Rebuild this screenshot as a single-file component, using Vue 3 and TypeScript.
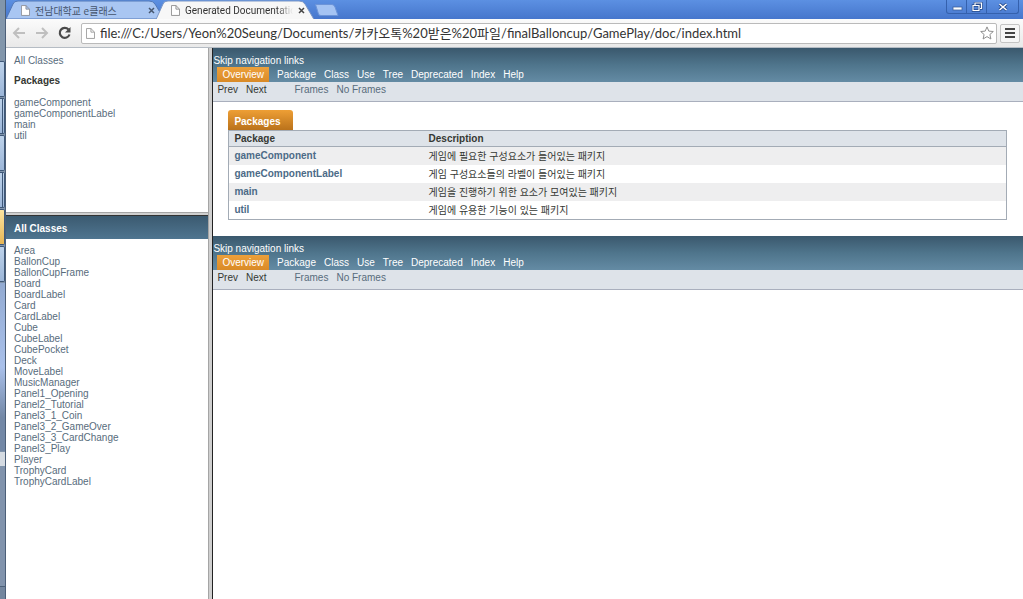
<script setup lang="ts">
import { ref } from 'vue'

interface Pkg {
  name: string
  description: string
}

const address = ref('file:///C:/Users/Yeon%20Seung/Documents/카카오톡%20받은%20파일/finalBalloncup/GamePlay/doc/index.html')

const packages: Pkg[] = [
  { name: 'gameComponent', description: '게임에 필요한 구성요소가 들어있는 패키지' },
  { name: 'gameComponentLabel', description: '게임 구성요소들의 라벨이 들어있는 패키지' },
  { name: 'main', description: '게임을 진행하기 위한 요소가 모여있는 패키지' },
  { name: 'util', description: '게임에 유용한 기능이 있는 패키지' },
]

const classes: string[] = [
  'Area', 'BallonCup', 'BallonCupFrame', 'Board', 'BoardLabel', 'Card', 'CardLabel', 'Cube',
  'CubeLabel', 'CubePocket', 'Deck', 'MoveLabel', 'MusicManager', 'Panel1_Opening',
  'Panel2_Tutorial', 'Panel3_1_Coin', 'Panel3_2_GameOver', 'Panel3_3_CardChange',
  'Panel3_Play', 'Player', 'TrophyCard', 'TrophyCardLabel',
]

const navItems: string[] = ['Package', 'Class', 'Use', 'Tree', 'Deprecated', 'Index', 'Help']
</script>

<template>
  <div class="desktop">
    <div class="taskbar" aria-hidden="true">
      <span class="task-space"></span>
      <span class="task"></span>
      <span class="task double"></span>
      <span class="task"></span>
      <span class="task double"></span>
      <span class="task active"></span>
      <span class="task"></span>
      <span class="task-rest"></span>
      <span class="task-lang"></span>
      <span class="task-clock"></span>
      <span class="task-end"></span>
    </div>

    <div class="browser">
      <header class="titlebar">
        <div class="tab">
          <svg class="tab-shape" viewBox="0 0 158 19" preserveAspectRatio="none">
            <path d="M0 19 L7 4 Q8 1 12 1 H143 Q147 1 149 4 L158 19 Z" fill="#a9c6f2" stroke="#5279b8" />
          </svg>
          <svg class="page-icon" viewBox="0 0 10 12"><path d="M.5.5h5l4 4v7h-9zM5.500.5v4h4" fill="#fff" stroke="#8c9099" /></svg>
          <span class="tab-title korean">전남대학교 e클래스</span>
          <button class="tab-close" aria-label="탭 닫기"><svg viewBox="0 0 7 7"><path d="M1 1l5 5M6 1l-5 5" stroke="#46566e" stroke-width="1.500" /></svg></button>
        </div>
        <div class="tab current">
          <svg class="tab-shape" viewBox="0 0 158 19" preserveAspectRatio="none">
            <path d="M0 19.500 L7 4 Q8 1 12 1 H143 Q147 1 149 4 L158 19.500" fill="#f7f7f7" stroke="#7d98c6" />
          </svg>
          <svg class="page-icon" viewBox="0 0 10 12"><path d="M.5.5h5l4 4v7h-9zM5.500.5v4h4" fill="#fff" stroke="#8c8c8c" /></svg>
          <span class="tab-title">Generated Documentatio</span>
          <button class="tab-close" aria-label="탭 닫기"><svg viewBox="0 0 7 7"><path d="M1 1l5 5M6 1l-5 5" stroke="#444" stroke-width="1.500" /></svg></button>
        </div>
        <button class="new-tab" aria-label="새 탭">
          <svg viewBox="0 0 26 12"><path d="M1.500 .5 H18 Q20 .5 21 3 L24 11.500 H7 Q5 11.500 4.500 10 Z" fill="#a4c3f3" stroke="#6c94d8" /></svg>
        </button>
        <div class="window-buttons">
          <button class="win" aria-label="최소화"><svg viewBox="0 0 12 10"><rect x="2" y="5" width="9" height="3" fill="#fff" stroke="#3c5f9c" stroke-width=".8" /></svg></button>
          <button class="win" aria-label="이전 크기로"><svg viewBox="0 0 12 10"><path d="M4 3V1h6.500v5.500H9M2 3.500h6v5H2z" fill="none" stroke="#24498a" stroke-width="2.400" /><path d="M4 3V1h6.500v5.500H9M2 3.500h6v5H2z" fill="none" stroke="#fff" stroke-width="1.200" /></svg></button>
          <button class="win wide" aria-label="닫기"><svg viewBox="0 0 12 10"><path d="M2.500 2l7 6M9.500 2l-7 6" stroke="#24498a" stroke-width="3" /><path d="M2.500 2l7 6M9.500 2l-7 6" stroke="#fff" stroke-width="1.600" /></svg></button>
        </div>
      </header>

      <div class="toolbar">
        <button class="tool" aria-label="뒤로"><svg viewBox="0 0 14 14"><path d="M13 7H2M7 2L2 7l5 5" fill="none" stroke="#bfbfbf" stroke-width="2" /></svg></button>
        <button class="tool" aria-label="앞으로"><svg viewBox="0 0 14 14"><path d="M1 7h11M7 2l5 5-5 5" fill="none" stroke="#bfbfbf" stroke-width="2" /></svg></button>
        <button class="tool" aria-label="새로고침"><svg viewBox="0 0 14 14"><path d="M10.500 3.500A5 5 0 1 0 11.500 8.500" fill="none" stroke="#4a4a4a" stroke-width="2.200" /><path d="M12.500 1v5.500H7z" fill="#4a4a4a" /></svg></button>
        <div class="omnibox">
          <svg class="page-icon" viewBox="0 0 10 12"><path d="M.5.5h5l4 4v7h-9zM5.500.5v4h4" fill="#fff" stroke="#999" /></svg>
          <input v-model="address" class="address" type="text" aria-label="주소" />
          <button class="star" aria-label="북마크"><svg viewBox="0 0 14 14"><path d="M7 .9l1.800 4.200 4.500.4-3.400 3 1 4.500L7 10.600 3.100 13l1-4.500-3.400-3 4.500-.4z" fill="#fff" stroke="#8e8e8e" /></svg></button>
        </div>
        <button class="menu" aria-label="메뉴"><svg viewBox="0 0 10 10"><path d="M0 1h10M0 5h10M0 9h10" stroke="#444" stroke-width="2" /></svg></button>
      </div>

      <div class="frames">
        <div class="left-frames">
          <nav class="package-frame">
            <a href="#">All Classes</a>
            <h2>Packages</h2>
            <ul>
              <li v-for="p in packages" :key="p.name"><a href="#">{{ p.name }}</a></li>
            </ul>
          </nav>
          <div class="h-split"></div>
          <nav class="class-frame">
            <h1>All Classes</h1>
            <ul>
              <li v-for="c in classes" :key="c"><a href="#">{{ c }}</a></li>
            </ul>
          </nav>
        </div>
        <div class="v-split"></div>
        <main class="doc">
          <template v-for="part in ['top', 'bottom']" :key="part">
            <nav class="doc-nav">
              <div class="nav-bar">
                <a class="skip" href="#">Skip navigation links</a>
                <ul class="nav-list">
                  <li class="here">Overview</li>
                  <li v-for="n in navItems" :key="n"><a href="#">{{ n }}</a></li>
                </ul>
              </div>
              <div class="sub-nav">
                <ul>
                  <li>Prev</li>
                  <li>Next</li>
                </ul>
                <ul>
                  <li><a href="#">Frames</a></li>
                  <li><a href="#">No Frames</a></li>
                </ul>
              </div>
            </nav>
            <div v-if="part === 'top'" class="content">
              <table>
                <caption><span>Packages</span></caption>
                <thead>
                  <tr><th scope="col">Package</th><th scope="col">Description</th></tr>
                </thead>
                <tbody>
                  <tr v-for="p in packages" :key="p.name">
                    <td class="name"><a href="#">{{ p.name }}</a></td>
                    <td class="description">{{ p.description }}</td>
                  </tr>
                </tbody>
              </table>
            </div>
          </template>
        </main>
      </div>
    </div>
  </div>
</template>

<style>
html,
body,
#app {
  height: 100%;
}
</style>

<style scoped>
.desktop {
  display: flex;
  height: 100%;
  overflow: hidden;
  background: #fff;
  font: 10px/11px "Liberation Sans", "Noto Sans CJK KR", sans-serif;
  color: #353833;
}
ul, h1, h2 {
  margin: 0;
  padding: 0;
  list-style: none;
}
a {
  color: #586c7c;
  text-decoration: none;
}
button {
  display: flex;
  align-items: center;
  justify-content: center;
  padding: 0;
  border: 0;
  background: none;
}
svg {
  display: block;
}

.taskbar {
  display: flex;
  flex-direction: column;
  flex: none;
  gap: 1px;
  width: 6px;
  box-sizing: border-box;
  border-right: 1px solid #4c5f78;
  background: #8094ab;
}
.task-space { height: 60px; background: #8296ab; }
.task {
  box-sizing: border-box;
  height: 36px;
  border: 1px solid #3f5878;
  border-left: 0;
  border-radius: 0 2px 2px 0;
  background: linear-gradient(#bdd2ea, #9cb6d8);
}
.task.double { border-right: 3px double #3f5878; }
.task.active { background: linear-gradient(#fbe3a0, #e8b654); }
.task-rest { flex: 0 0 168px; background: linear-gradient(#93abd2, #a9c0ea 50%, #7388a6 80%); }
.task-lang { height: 14px; background: #d5dbe2; }
.task-clock { flex: 1; background: #8193ac; }
.task-end { height: 12px; border-top: 1px solid #4c5f78; background: #73869e; }

.browser {
  display: flex;
  flex: 1;
  flex-direction: column;
  min-width: 0;
}
.titlebar {
  display: flex;
  flex: none;
  height: 19px;
  background: linear-gradient(#5c90e2, #4676cc);
  font: 10px/18px Roboto, "Noto Sans CJK KR", sans-serif;
}
.tab {
  position: relative;
  display: flex;
  align-items: center;
  box-sizing: border-box;
  width: 158px;
  gap: 5px;
  padding: 2px 9px 0 15px;
  color: #44536b;
}
.tab.current {
  z-index: 1;
  margin-left: -8px;
  color: #333;
}
.tab-shape {
  position: absolute;
  inset: 0;
  width: 100%;
  height: 100%;
}
.page-icon {
  position: relative;
  flex: none;
  width: 9px;
  height: 11px;
}
.tab-title {
  position: relative;
  flex: 1;
  min-width: 0;
  white-space: nowrap;
}
.tab-title.korean {
  font-family: "Open Sans", "Noto Sans CJK KR", sans-serif;
}
.current .tab-title {
  mask-image: linear-gradient(to right, #000 85%, transparent);
}
.tab-close {
  position: relative;
  flex: none;
  width: 7px;
}
.tab-close svg {
  width: 7px;
  height: 7px;
}
.new-tab {
  width: 26px;
}
.new-tab svg {
  width: 26px;
  height: 12px;
}
.window-buttons {
  display: flex;
  height: 13px;
  margin: 0 4px 0 auto;
  border: 1px solid #3561ad;
  border-top: 0;
  border-radius: 0 0 3px 3px;
}
.win {
  width: 20px;
  border-right: 1px solid #3561ad;
}
.win.wide {
  width: 31px;
  border-right: 0;
}
.win svg {
  width: 12px;
  height: 10px;
}

.toolbar {
  display: flex;
  flex: none;
  align-items: center;
  box-sizing: border-box;
  height: 29px;
  gap: 9px;
  padding: 0 3px 0 6px;
  border-bottom: 1px solid #b5bcc4;
  background: linear-gradient(#fbfbfb, #e9e9e9);
}
.tool svg {
  width: 14px;
  height: 14px;
}
.omnibox {
  display: flex;
  flex: 1;
  align-items: center;
  box-sizing: border-box;
  height: 21px;
  margin-right: -6px;
  padding: 0 2px 0 4px;
  gap: 5px;
  border: 1px solid #bababa;
  border-radius: 2px;
  background: #fff;
}
.address {
  flex: 1;
  min-width: 0;
  height: 18px;
  padding: 0;
  border: 0;
  outline: 0;
  background: none;
  color: #333;
  font: 13px/18px Lato, "Noto Sans CJK KR", sans-serif;
}
.star svg {
  width: 14px;
  height: 14px;
}
.menu {
  box-sizing: border-box;
  width: 20px;
  height: 19px;
  border: 1px solid #c4c4c4;
  border-radius: 2px;
  background: #f6f6f6;
}
.menu svg {
  width: 10px;
  height: 10px;
}

.frames {
  display: grid;
  flex: 1;
  grid-template-columns: minmax(0, 1fr) 5px minmax(0, 4fr);
  min-height: 0;
}
.left-frames {
  display: grid;
  grid-template-rows: minmax(0, 3fr) 4px minmax(0, 7fr);
  min-height: 0;
}
.package-frame {
  padding: 7px 8px;
}
.package-frame h2 {
  margin: 9px 0 10px;
  font-size: 10px;
  line-height: 12px;
}
.h-split {
  box-sizing: border-box;
  border-top: 1px solid #a5a5a5;
  border-bottom: 1px solid #333;
  background: #cfcfcf;
}
.v-split {
  box-sizing: border-box;
  border-left: 1px solid #a5a5a5;
  border-right: 1px solid #222;
  background: #cfcfcf;
}
.class-frame h1 {
  padding: 7px 8px 4px;
  background: linear-gradient(#3b5a70, #4f7590);
  color: #fff;
  font-size: 10px;
  line-height: 12px;
}
.class-frame ul {
  padding: 6px 8px;
}
.doc {
  min-width: 0;
}
.nav-bar {
  padding-top: 7px;
  background: linear-gradient(#3a586d, #4f758c 50%, #648ba4);
}
.skip {
  display: block;
  line-height: 12px;
  color: #fff;
}
.nav-list {
  display: flex;
  gap: 8px;
  padding-left: 4px;
  color: #fff;
  line-height: 15px;
}
.nav-list a {
  color: #fff;
}
.nav-list .here {
  padding: 0 5px;
  background: linear-gradient(#eda03a, #d98a27);
}
.sub-nav {
  display: flex;
  gap: 28px;
  box-sizing: border-box;
  height: 20px;
  padding: 2px 4px;
  border-bottom: 1px solid #a9afbd;
  background: #dee3e9;
}
.sub-nav ul {
  display: flex;
  gap: 8px;
}
.content {
  padding: 8px 16px 16px 15px;
}
table {
  width: 100%;
  border-spacing: 0;
  border: 1px solid #a3abb5;
  border-top: 0;
  table-layout: fixed;
}
caption {
  text-align: left;
}
caption span {
  display: block;
  box-sizing: border-box;
  width: 65px;
  height: 20px;
  padding-left: 6px;
  border-radius: 3px 3px 0 0;
  background: linear-gradient(#ee9f35, #ba721b);
  color: #fff;
  font-weight: bold;
  line-height: 23px;
}
th,
td {
  box-sizing: border-box;
  height: 18px;
  padding: 0 5px;
  text-align: left;
  line-height: 16px;
}
th {
  height: 17px;
  line-height: 15px;
  border-top: 1px solid #a3abb5;
  border-bottom: 1px solid #a3abb5;
  background: #dee3e9;
}
th:first-child {
  width: 25%;
}
tbody tr:nth-child(odd) {
  background: #eeeeef;
}
.name {
  font-weight: bold;
}
.name a {
  color: #4c6b87;
}
.description {
  padding-top: 2px;
}
</style>
